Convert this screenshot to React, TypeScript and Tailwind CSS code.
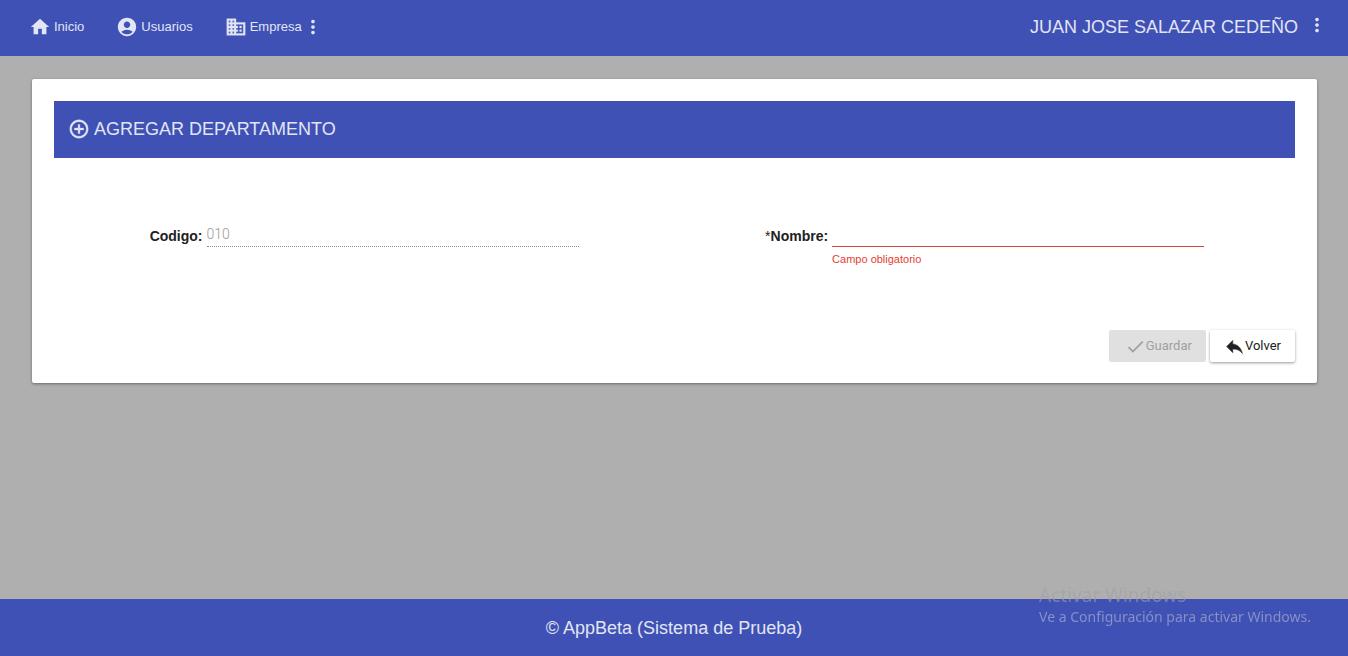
import type { ReactNode } from "react";
import { MdAccountCircle, MdCheck, MdHome, MdMoreVert } from "react-icons/md";

function BoldIcon({ d, size, stroke }: { d: string; size: number; stroke: number }) {
  return (
    <svg
      width={size}
      height={size}
      viewBox="0 0 24 24"
      fill="currentColor"
      stroke="currentColor"
      strokeWidth={stroke}
      aria-hidden="true"
    >
      <path d={d} />
    </svg>
  );
}

const domainPath =
  "M12 7V3H2v18h20V7H12zM6 19H4v-2h2v2zm0-4H4v-2h2v2zm0-4H4V9h2v2zm0-4H4V5h2v2zm4 12H8v-2h2v2zm0-4H8v-2h2v2zm0-4H8V9h2v2zm0-4H8V5h2v2zm10 12h-8v-2h2v-2h-2v-2h2v-2h-2V9h8v10zm-2-8h-2v2h2v-2zm0 4h-2v2h2v-2z";
const addPath =
  "M13 7h-2v4H7v2h4v4h2v-4h4v-2h-4V7zm-1-5C6.48 2 2 6.48 2 12s4.48 10 10 10 10-4.48 10-10S17.52 2 12 2zm0 18c-4.41 0-8-3.59-8-8s3.59-8 8-8 8 3.59 8 8-3.59 8-8 8z";
const replyPath = "M10 9V5l-7 7 7 7v-4.1c5 0 8.500 1.600 11 5.100-1-5-4-10-11-11z";

function NavLink({ icon, label }: { icon: ReactNode; label: string }) {
  return (
    <a href="#" className="flex items-center gap-[3px]">
      {icon}
      {label}
    </a>
  );
}

export default function App() {
  return (
    <div className="flex min-h-screen flex-col bg-[#afafaf] font-['Liberation_Sans',Arial,sans-serif] text-[#212121]">
      <header className="flex h-14 items-center justify-between bg-[#3f51b5] pr-5 pl-[29px] text-[#e2e5f4]">
        <nav className="flex items-center gap-8 pb-0.5 text-[13px]">
          <NavLink icon={<MdHome size={22} />} label="Inicio" />
          <NavLink icon={<MdAccountCircle size={22} />} label="Usuarios" />
          <div className="flex items-center">
            <NavLink icon={<BoldIcon d={domainPath} size={22} stroke={0.4} />} label="Empresa" />
            <button type="button" aria-label="Opciones de empresa">
              <MdMoreVert size={22} />
            </button>
          </div>
        </nav>
        <div className="flex items-center gap-2 pb-0.5 text-lg">
          <span>JUAN JOSE SALAZAR CEDEÑO</span>
          <button type="button" aria-label="Opciones de usuario" className="pb-1">
            <MdMoreVert size={22} />
          </button>
        </div>
      </header>

      <main className="flex-1 pt-[23px] pr-[31px] pb-6 pl-8">
        <form className="rounded-xs bg-white px-[22px] pt-[22px] pb-[21px] shadow-[0_1px_3px_rgba(0,0,0,0.4)]">
          <h1 className="flex h-[57px] items-center gap-1 bg-[#3f51b5] px-3.5 pb-0.5 text-lg text-[#e2e5f4]">
            <BoldIcon d={addPath} size={22} stroke={0.4} />
            AGREGAR DEPARTAMENTO
          </h1>

          <div className="grid grid-cols-2 pt-[63px]">
            <div className="flex items-start justify-center gap-1">
              <label htmlFor="codigo" className="pt-[3px] text-sm leading-6 font-bold">
                Codigo:
              </label>
              <input
                id="codigo"
                defaultValue="010"
                disabled
                className="h-[26px] w-3/5 border-b border-dotted border-[#8a8a8a] bg-transparent font-['Roboto',sans-serif] text-sm font-light text-[#9a9a9a]"
              />
            </div>
            <div className="flex items-start justify-center gap-1">
              <label htmlFor="nombre" className="pt-[3px] text-sm leading-6 font-bold">
                <span className="font-normal">*</span>Nombre:
              </label>
              <div className="w-3/5">
                <input
                  id="nombre"
                  aria-describedby="nombre-error"
                  className="block h-[26px] w-full border-b border-[#d0493f] bg-transparent text-sm outline-none"
                />
                <p id="nombre-error" className="pt-1 text-[11px] leading-4 text-[#e53e34]">
                  Campo obligatorio
                </p>
              </div>
            </div>
          </div>

          <div className="flex justify-end gap-1 pt-[63px] font-['Roboto',sans-serif] text-[13px]">
            <button
              type="submit"
              disabled
              className="flex h-8 items-center rounded-xs bg-[#e0e0e0] pr-3.5 pl-4 text-[#a0a0a0]"
            >
              <MdCheck size={21} />
              Guardar
            </button>
            <button
              type="button"
              className="flex h-8 items-center rounded-xs bg-white px-3.5 shadow-[0_1px_3px_rgba(0,0,0,0.4)]"
            >
              <BoldIcon d={replyPath} size={21} stroke={0.6} />
              Volver
            </button>
          </div>
        </form>
      </main>

      <footer className="flex h-[57px] items-center justify-center bg-[#3f51b5] text-lg text-[#e2e5f4]">
        © AppBeta (Sistema de Prueba)
      </footer>

      <aside className="pointer-events-none fixed right-[37px] bottom-[29px] font-['Noto_Sans','Open_Sans',sans-serif] whitespace-nowrap">
        <p className="text-[19px] leading-6 text-[#a0a0a0]/60">Activar Windows</p>
        <p className="text-sm text-[#8690c6]">Ve a Configuración para activar Windows.</p>
      </aside>
    </div>
  );
}
